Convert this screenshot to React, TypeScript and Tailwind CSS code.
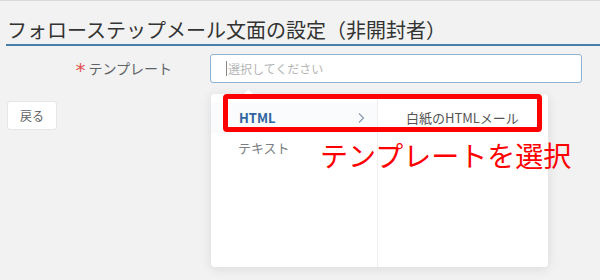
import React from "react";

const font = { fontFamily: '"Noto Sans CJK JP", "Noto Sans", sans-serif' };

export default function App() {
  return (
    <div
      style={font}
      className="relative w-[600px] h-[280px] overflow-hidden bg-[#f2f2f2] border-t border-[#d9d9d9]"
    >
      <h1 className="ml-[6px] mt-[15px] pl-[1px] text-[20px] leading-[28px] text-[#333333] border-b-2 border-[#4a7fab]">
        フォローステップメール文面の設定（非開封者）
      </h1>

      <div className="mt-[8px] flex items-center">
        <div className="w-[172px] flex items-center justify-end text-[14px] text-[#606266]">
          <span className="font-['DejaVu_Sans',sans-serif] text-[20px] leading-none text-[#e0504f] mr-[3px] mt-[3px]">*</span>
          <span>テンプレート</span>
        </div>
        <div className="ml-[38px] w-[372px] h-[29px] rounded-[3px] border border-[#8fb3d3] bg-white flex items-center pl-[15px]">
          <span className="w-[1px] h-[15px] bg-[#888] mr-[1px]" />
          <span className="text-[12px] text-[#b5b5b5]">選択してください</span>
        </div>
      </div>

      <div className="mt-[18px] ml-[7px]">
        <button className="w-[50px] h-[29px] rounded-[3px] border border-[#e6e6e6] bg-white text-[12px] text-[#606266]">
          戻る
        </button>
      </div>

      {/* dropdown */}
      <div className="absolute left-[211px] top-[93px] w-[337px] h-[173px] rounded-[4px] bg-white shadow-[0_2px_12px_rgba(0,0,0,0.1)] flex">
        <div className="absolute left-[34px] -top-[3px] w-[7px] h-[7px] bg-white rotate-45" />
        <div className="w-[167px] border-r border-[#eceef2] pt-[9px]">
          <div className="h-[30px] flex items-center justify-between pl-[28px] pr-[12px] bg-[#fafbfc]">
            <span className="text-[13px] font-bold text-[#2f64a0]">HTML</span>
            <svg width="8" height="12" viewBox="0 0 8 12" fill="none">
              <path d="M2 1.5 L6.5 6 L2 10.5" stroke="#8a9bb0" strokeWidth="1.2" />
            </svg>
          </div>
          <div className="h-[30px] flex items-center pl-[27px] text-[13px] text-[#7a7d82]">
            テキスト
          </div>
        </div>
        <div className="flex-1 pt-[9px]">
          <div className="h-[30px] flex items-center pl-[28px] text-[13px] text-[#555]">
            白紙のHTMLメール
          </div>
        </div>
      </div>

      {/* highlight */}
      <div className="absolute left-[223px] top-[93px] w-[319px] h-[38px] rounded-[4px] border-[5px] border-[#ff0000]" />

      <div className="absolute left-[320px] top-[140px] text-[28px] leading-[28px] text-[#ff0000] whitespace-nowrap">
        テンプレートを選択
      </div>
    </div>
  );
}
